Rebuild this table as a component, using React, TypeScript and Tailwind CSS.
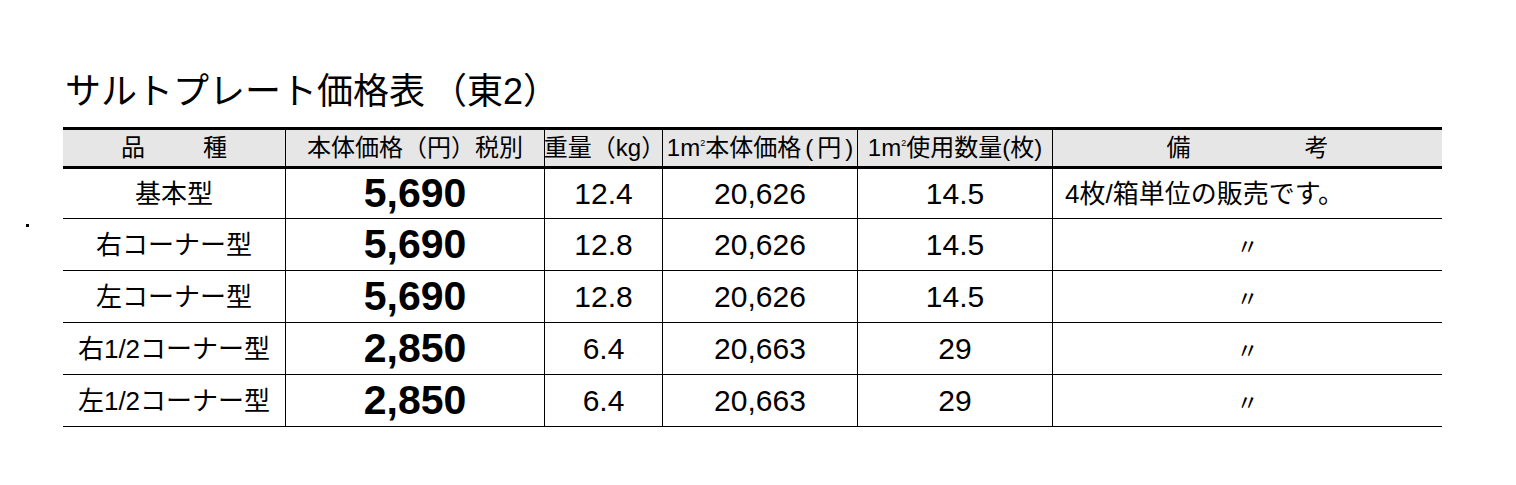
import React from "react";

const jp = "font-['Liberation_Sans','Noto_Sans_CJK_JP',sans-serif]";

type Row = {
  name: string;
  price: string;
  weight: string;
  perM2: string;
  count: string;
  note: string;
  ditto: boolean;
  h: string;
};

const rows: Row[] = [
  { name: "基本型", price: "5,690", weight: "12.4", perM2: "20,626", count: "14.5", note: "4枚/箱単位の販売です。", ditto: false, h: "h-[50px]" },
  { name: "右コーナー型", price: "5,690", weight: "12.8", perM2: "20,626", count: "14.5", note: "〃", ditto: true, h: "h-[52px]" },
  { name: "左コーナー型", price: "5,690", weight: "12.8", perM2: "20,626", count: "14.5", note: "〃", ditto: true, h: "h-[52px]" },
  { name: "右1/2コーナー型", price: "2,850", weight: "6.4", perM2: "20,663", count: "29", note: "〃", ditto: true, h: "h-[52px]" },
  { name: "左1/2コーナー型", price: "2,850", weight: "6.4", perM2: "20,663", count: "29", note: "〃", ditto: true, h: "h-[52px]" },
];

const cols = "grid grid-cols-[223px_259px_118px_195px_195px_389px]";

function M2() {
  return (
    <>
      1m<span className="text-[9px] leading-none self-start mt-[9px]">2</span>
    </>
  );
}

function HeaderRow() {
  return (
    <div className={`${cols} h-[42px] border-y-[3px] border-black bg-[#e6e6e6] text-[24px] leading-none whitespace-nowrap text-black`}>
      <div className="flex items-center justify-center gap-[58px] border-r border-black">
        <span>品</span>
        <span>種</span>
      </div>
      <div className="flex items-center justify-center border-r border-black">本体価格（円）税別</div>
      <div className="flex items-center justify-center border-r border-black pl-[2px]">重量（kg）</div>
      <div className="flex items-center justify-center border-r border-black">
        <M2 />
        本体価格<span className="mx-[4px]">(</span>円<span className="ml-[4px]">)</span>
      </div>
      <div className="flex items-center justify-center border-r border-black">
        <M2 />
        使用数量(枚)
      </div>
      <div className="flex items-center justify-center gap-[114px]">
        <span>備</span>
        <span>考</span>
      </div>
    </div>
  );
}

function BodyRow({ row }: { row: Row }) {
  return (
    <div className={`${cols} ${row.h} border-b border-black leading-none whitespace-nowrap text-black`}>
      <div className="flex items-center justify-center border-r border-black text-[26px]">{row.name}</div>
      <div className="flex items-center justify-center border-r border-black text-[41px] font-bold">{row.price}</div>
      <div className="flex items-center justify-center border-r border-black text-[30px]">{row.weight}</div>
      <div className="flex items-center justify-center border-r border-black text-[30px]">{row.perM2}</div>
      <div className="flex items-center justify-center border-r border-black text-[30px]">{row.count}</div>
      {row.ditto ? (
        <div className="flex items-center justify-center pt-[4px] text-[22px]">{row.note}</div>
      ) : (
        <div className="flex items-center pl-[12px] text-[26px]">{row.note}</div>
      )}
    </div>
  );
}

export default function App() {
  return (
    <div className={`relative h-[485px] w-full bg-white ${jp}`}>
      {/* stray dot in the margin */}
      <div className="absolute left-[26px] top-[224px] h-[3px] w-[3px] bg-black" />
      <div className="pl-[63px] pt-[74px]">
        <h1 className="mb-[17px] flex h-[36px] pl-[2px] text-[36px] leading-[36px] font-normal whitespace-nowrap text-black">
          <span>サルトプレート価格表</span>
          <span className="ml-[6px]">（東2）</span>
        </h1>
        <div className="w-[1379px]">
          <HeaderRow />
          {rows.map((r) => (
            <BodyRow row={r} key={r.name} />
          ))}
        </div>
      </div>
    </div>
  );
}
